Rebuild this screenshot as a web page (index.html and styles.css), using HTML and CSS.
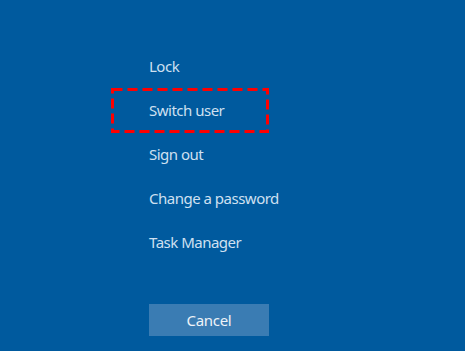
FILE: index.html
```html
<!DOCTYPE html>
<html>
<head>
<meta charset="utf-8">
<link rel="stylesheet" href="styles.css">
</head>
<body>
<div class="screen">
  <ul class="menu">
    <li class="item">Lock</li>
    <li class="item item-highlight">Switch user
      <svg class="highlight" width="158" height="45" viewBox="0 0 158 45" aria-hidden="true">
        <rect x="1.5" y="1.5" width="155" height="42" fill="none" stroke="#ff0000" stroke-width="3" stroke-dasharray="10 5"/>
      </svg>
    </li>
    <li class="item">Sign out</li>
    <li class="item">Change a password</li>
    <li class="item">Task Manager</li>
  </ul>
  <button class="cancel" type="button">Cancel</button>
</div>
</body>
</html>
```
FILE: styles.css
```css
html, body {
  margin: 0;
  padding: 0;
}
body {
  background: #005a9e;
  width: 465px;
  height: 351px;
  overflow: hidden;
  font-family: "Noto Sans", "Open Sans", sans-serif;
}
.screen {
  display: flex;
  flex-direction: column;
  align-items: flex-start;
  padding: 44px 0 0 149px;
}
.menu {
  list-style: none;
  margin: 0;
  padding: 0;
  display: flex;
  flex-direction: column;
}
.item {
  position: relative;
  height: 44px;
  line-height: 44px;
  font-size: 15px;
  letter-spacing: -0.5px;
  color: #cfe0f1;
  white-space: nowrap;
}
.highlight {
  position: absolute;
  left: -38px;
  top: 0;
}
.cancel {
  margin-top: 40px;
  width: 120px;
  height: 32px;
  border: none;
  background: #3a7cb3;
  color: #eef3f8;
  font-family: "Noto Sans", "Open Sans", sans-serif;
  font-size: 15px;
  letter-spacing: -0.3px;
  padding: 0;
}
```
